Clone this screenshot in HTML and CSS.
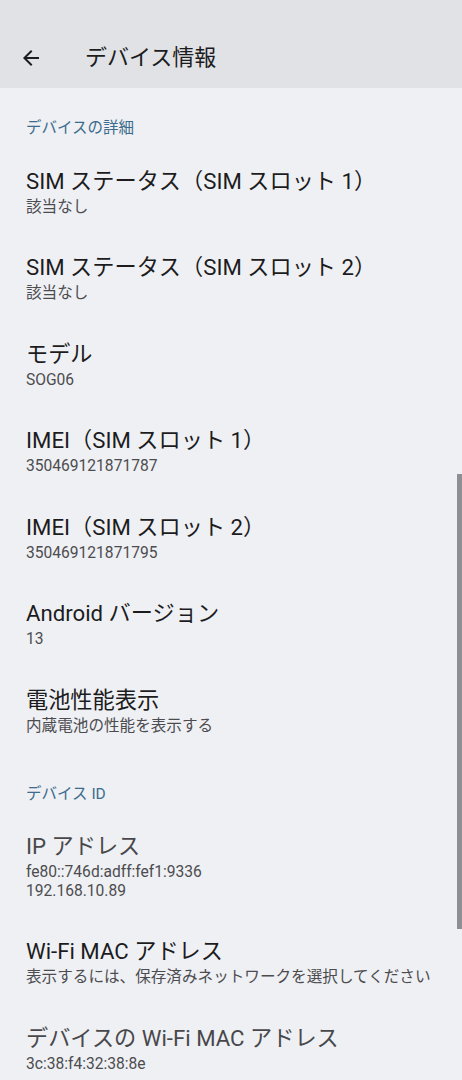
FILE: index.html
```html
<!DOCTYPE html>
<html lang="ja">
  <head>
    <meta charset="utf-8">
    <link rel="stylesheet" href="styles.css">
  </head>
  <body>
    <div class="topbar">
      <svg class="back" width="24" height="24" viewBox="0 0 24 24">
        <path d="M20 11H7.83l5.59-5.59L12 4l-8 8 8 8 1.41-1.41L7.83 13H20v-2z" fill="#1c1c1e"/>
      </svg>
      <span class="topbar-title">デバイス情報</span>
    </div>

    <div class="list">
      <div class="section">デバイスの詳細</div>

      <div class="item">
        <div class="item-title">SIM ステータス（SIM スロット 1）</div>
        <div class="item-sub">該当なし</div>
      </div>
      <div class="item">
        <div class="item-title">SIM ステータス（SIM スロット 2）</div>
        <div class="item-sub">該当なし</div>
      </div>
      <div class="item">
        <div class="item-title">モデル</div>
        <div class="item-sub">SOG06</div>
      </div>
      <div class="item">
        <div class="item-title">IMEI（SIM スロット 1）</div>
        <div class="item-sub">350469121871787</div>
      </div>
      <div class="item">
        <div class="item-title">IMEI（SIM スロット 2）</div>
        <div class="item-sub">350469121871795</div>
      </div>
      <div class="item">
        <div class="item-title">Android バージョン</div>
        <div class="item-sub">13</div>
      </div>
      <div class="item">
        <div class="item-title">電池性能表示</div>
        <div class="item-sub">内蔵電池の性能を表示する</div>
      </div>

      <div class="section">デバイス ID</div>

      <div class="item">
        <div class="item-title dim">IP アドレス</div>
        <div class="item-sub">fe80::746d:adff:fef1:9336<br>192.168.10.89</div>
      </div>
      <div class="item">
        <div class="item-title">Wi-Fi MAC アドレス</div>
        <div class="item-sub">表示するには、保存済みネットワークを選択してください</div>
      </div>
      <div class="item">
        <div class="item-title dim">デバイスの Wi-Fi MAC アドレス</div>
        <div class="item-sub">3c:38:f4:32:38:8e</div>
      </div>
    </div>

    <div class="scrollbar"></div>
  </body>
</html>
```

FILE: styles.css
```css
body {
  margin: 0;
  background-color: #eff0f3;
  color: #1c1c1e;
  font-family: Roboto, "Noto Sans CJK JP", sans-serif;
  overflow: hidden;
}

.topbar {
  height: 88px;
  box-sizing: border-box;
  padding: 28px 0 0 19px;
  background-color: #e1e2e5;
  display: flex;
  align-items: flex-start;
}

.back {
  margin-top: 18px;
}

.topbar-title {
  margin-left: 42px;
  font-size: 22px;
  line-height: 60px;
}

.list {
  padding: 0 26px;
}

.section {
  padding: 30px 0 10px;
  font-size: 15.5px;
  line-height: 20px;
  color: #3b6c8d;
}

.item {
  padding: 18.5px 0;
}

.item-title {
  font-size: 22.2px;
  line-height: 28px;
  white-space: nowrap;
}

.item-title.dim {
  color: #48484c;
}

.item-sub {
  margin-top: 3px;
  font-size: 15.6px;
  line-height: 18.5px;
  color: #4c4c50;
  white-space: nowrap;
}

.scrollbar {
  position: absolute;
  left: 457px;
  top: 474px;
  width: 5px;
  height: 455px;
  background-color: #8e8f94;
}
```
